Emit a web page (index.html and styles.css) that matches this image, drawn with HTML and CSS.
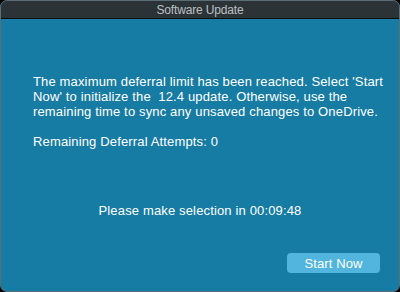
FILE: index.html
```html
<!DOCTYPE html>
<html lang="en">
<head>
    <meta charset="UTF-8">
    <meta name="viewport" content="width=device-width, initial-scale=1.0">
    <title>Software Update</title>
    <link rel="stylesheet" href="styles.css">
</head>
<body>
    <div class="window">
        <div class="titlebar">Software Update</div>

        <div class="content">
            <p class="message">
                The maximum deferral limit has been reached. Select 'Start Now' to initialize the&nbsp; 12.4 update. Otherwise, use the remaining time to sync any unsaved changes to OneDrive.
            </p>
            <p class="attempts">Remaining Deferral Attempts: 0</p>

            <p class="countdown">Please make selection in 00:09:48</p>

            <div class="actions">
                <button class="btn">Start Now</button>
            </div>
        </div>
    </div>
</body>
</html>
```

FILE: styles.css
```css
html, body {
    margin: 0;
    padding: 0;
    background-color: #000;
}

body {
    font-family: "Liberation Sans", Arial, sans-serif;
    width: 400px;
    height: 292px;
}

.window {
    box-sizing: border-box;
    width: 400px;
    height: 292px;
    border: 1px solid #5b6d76;
    border-radius: 7px;
    overflow: hidden;
    background-color: #177ca3;
    display: flex;
    flex-direction: column;
}

.titlebar {
    height: 17px;
    line-height: 18px;
    background-color: #2b3337;
    border-bottom: 1px solid #0c0f10;
    color: #bcc0c2;
    font-size: 12px;
    letter-spacing: -0.15px;
    text-align: center;
}

.content {
    flex: 1;
    display: flex;
    flex-direction: column;
    padding: 55px 8px 17px 32px;
    color: #fff;
    font-size: 13px;
    line-height: 15px;
    letter-spacing: 0.15px;
}

.message {
    margin: 0;
}

.attempts {
    margin: 15px 0 0;
}

.countdown {
    margin: 54px 0 0;
    text-align: center;
    padding-right: 24px;
}

.actions {
    margin-top: auto;
    display: flex;
    justify-content: flex-end;
    padding-right: 11px;
}

.btn {
    width: 93px;
    height: 20px;
    margin-bottom: 1px;
    padding: 0;
    border: none;
    border-radius: 4px;
    background-color: #52b5de;
    color: #fff;
    font-family: "Liberation Sans", Arial, sans-serif;
    font-size: 13px;
    letter-spacing: 0.1px;
    cursor: pointer;
}
```
